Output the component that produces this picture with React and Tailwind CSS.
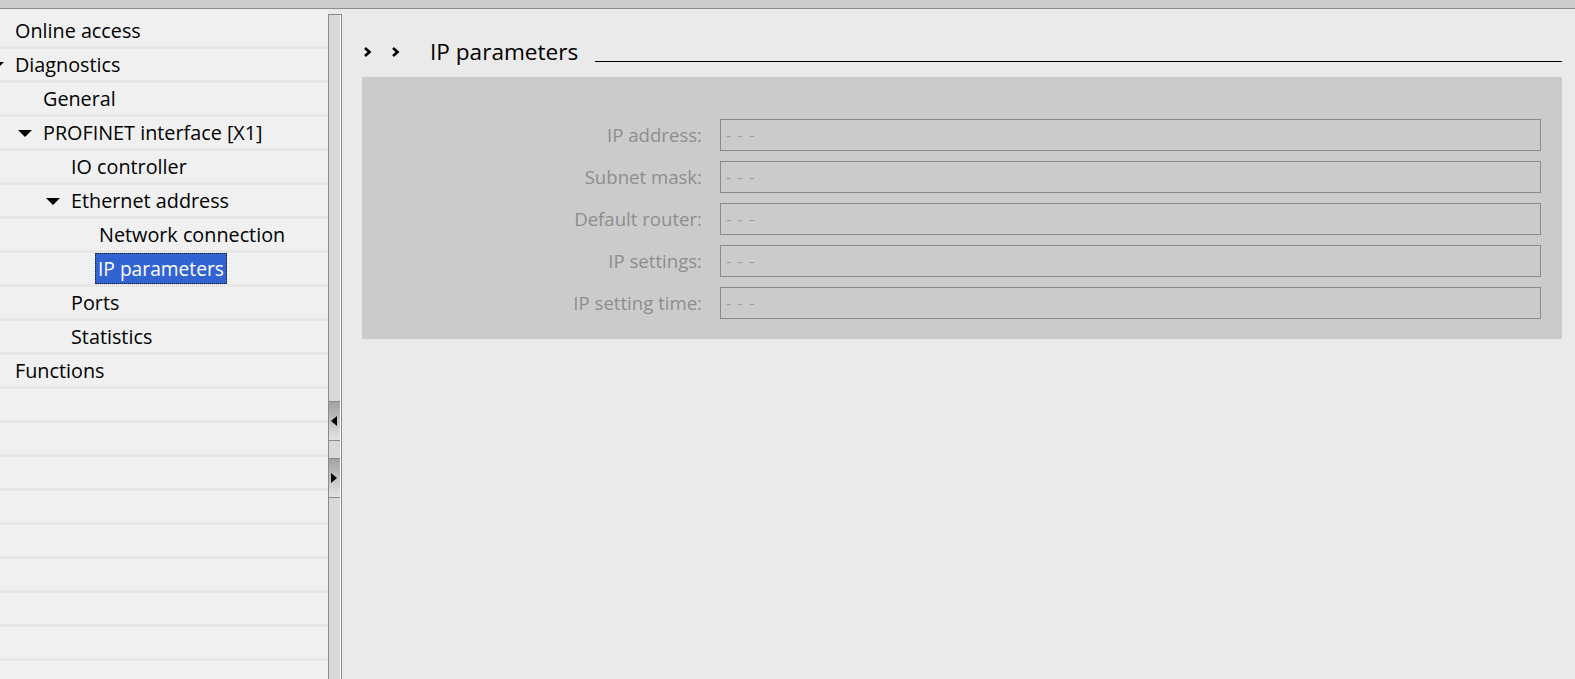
import React from "react";

const font = { fontFamily: '"Open Sans", "Noto Sans", sans-serif' };

const tree = [
  { label: "Online access", level: 0 },
  { label: "Diagnostics", level: 0, arrow: true },
  { label: "General", level: 1 },
  { label: "PROFINET interface [X1]", level: 1, arrow: true },
  { label: "IO controller", level: 2 },
  { label: "Ethernet address", level: 2, arrow: true },
  { label: "Network connection", level: 3 },
  { label: "IP parameters", level: 3, selected: true },
  { label: "Ports", level: 2 },
  { label: "Statistics", level: 2 },
  { label: "Functions", level: 0 },
  { label: "", level: 0 },
  { label: "", level: 0 },
  { label: "", level: 0 },
  { label: "", level: 0 },
  { label: "", level: 0 },
  { label: "", level: 0 },
  { label: "", level: 0 },
  { label: "", level: 0 },
];

const indents = ["pl-[15px]", "pl-[43px]", "pl-[71px]", "pl-[99px]"];

function Arrow() {
  return (
    <svg width="14" height="8" viewBox="0 0 14 8" className="absolute left-[-25px] top-[12px]">
      <polygon points="0,0 14,0 7,7" fill="#000" />
    </svg>
  );
}

function TreeRow({ item }) {
  return (
    <div className={`h-[34px] border-b-[3px] border-[#e6e6e6] flex items-center ${indents[item.level]}`}>
      {item.label && (
        <div className="relative">
          {item.arrow && <Arrow />}
          {item.selected ? (
            <span className="block bg-[#3263d3] text-white border border-dotted border-[#1a1a1a] px-[2px] ml-[-4px] leading-[29px] text-[19.2px]">
              {item.label}
            </span>
          ) : (
            <span className="text-black">{item.label}</span>
          )}
        </div>
      )}
    </div>
  );
}

function Chevron() {
  return (
    <svg width="9" height="12" viewBox="0 0 9 12">
      <polyline points="2,2 6.5,6 2,10" fill="none" stroke="#000" strokeWidth="2.6" />
    </svg>
  );
}

const fields = ["IP address:", "Subnet mask:", "Default router:", "IP settings:", "IP setting time:"];

function SplitBtn({ dir }) {
  return (
    <div className="h-[40px] border-t border-b border-[#8a8a8a] bg-gradient-to-b from-[#a2a2a2] to-[#e4e4e4] flex items-center pl-[2px]">
      <svg width="6" height="10" viewBox="0 0 6 10">
        {dir === "left" ? (
          <polygon points="6,0 6,10 0,5" fill="#000" />
        ) : (
          <polygon points="0,0 0,10 6,5" fill="#000" />
        )}
      </svg>
    </div>
  );
}

export default function App() {
  return (
    <div className="w-[1575px] h-[679px] overflow-hidden flex flex-col bg-[#eaeaea]" style={font}>
      <div className="h-[9px] bg-[#cdcdcd] border-b border-[#8c8c8c] shrink-0" />
      <div className="flex flex-1 min-h-0">
        <div className="w-[328px] bg-[#f0f0f0] pt-[6px] text-[19.8px] overflow-hidden shrink-0">
          {tree.map((item, i) => (
            <TreeRow key={i} item={item} />
          ))}
        </div>
        <div className="w-[14px] shrink-0 mt-[5px] bg-[#d9d9d9] border-l border-t border-[#8a8a8a] flex">
          <div className="flex-1 flex flex-col pt-[386px]">
            <SplitBtn dir="left" />
            <div className="h-[17px]" />
            <SplitBtn dir="right" />
          </div>
          <div className="w-px bg-white" />
          <div className="w-px bg-[#8a8a8a]" />
        </div>
        <div className="flex-1 pl-[20px] pr-[13px] pt-[28px]">
          <div className="flex items-center h-[30px]">
            <div className="flex items-center gap-[19px] pl-[1px]">
              <Chevron />
              <Chevron />
            </div>
            <div className="ml-[30px] text-[22.6px] text-black">IP parameters</div>
            <div className="flex-1 ml-[17px] h-px bg-black mt-[19px]" />
          </div>
          <div className="mt-[10px] bg-[#cbcbcb] pt-[42px] pb-[20px] pr-[21px] flex flex-col gap-[10px]">
            {fields.map((f) => (
              <div key={f} className="flex items-center h-[32px]">
                <div className="w-[358px] pr-[18px] text-right text-[18.6px] text-[#8e8e8e]">{f}</div>
                <div className="flex-1 h-[32px] border border-[#8a8a8a] flex items-center pl-[5px] text-[15px] text-[#9a9a9a] tracking-[1.5px]">
                  - - -
                </div>
              </div>
            ))}
          </div>
        </div>
      </div>
    </div>
  );
}
